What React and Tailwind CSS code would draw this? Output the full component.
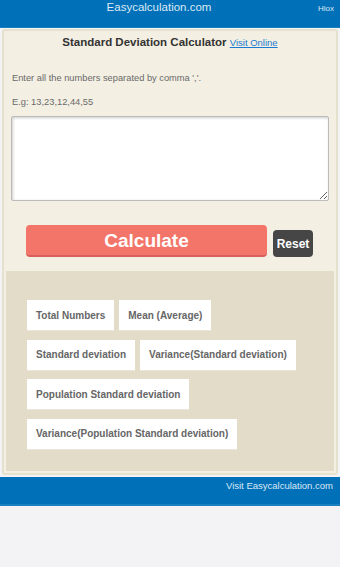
export default function App() {
  const results = [
    ['Total Numbers', 'Mean (Average)'],
    ['Standard deviation', 'Variance(Standard deviation)'],
    ['Population Standard deviation'],
    ['Variance(Population Standard deviation)'],
  ];

  return (
    <div className="min-h-[567px] bg-[#f3f2f5] font-['Liberation_Sans',Arial,sans-serif]">
      {/* Header */}
      <header className="relative h-[28px] bg-[#0070b8] border-b border-[#1a80c0]">
        <div className="text-center pr-[22px] text-[11.5px] leading-[14px] text-[#dde9f5]">
          Easycalculation.com
        </div>
        <span className="absolute right-[6px] top-[3px] text-[8px] text-[#dde9f5]">Hlox</span>
      </header>

      {/* Calculator card */}
      <div className="mx-[2px] mt-[1px] bg-[#f3efe3] border-[2px] border-[#e6e0cf] rounded-[3px] pb-[2px]">
        <h1 className="text-center pt-[3px] text-[11.5px] leading-[16px] font-bold text-[#333]">
          Standard Deviation Calculator{' '}
          <a className="text-[9.5px] font-normal text-[#1a7bd0] underline">Visit Online</a>
        </h1>

        <p className="mt-[21px] px-[8px] text-[9.3px] leading-[12px] text-[#6a6a6a]">
          Enter all the numbers separated by comma ','.
        </p>
        <p className="mt-[12px] px-[8px] text-[9.3px] leading-[12px] text-[#6a6a6a]">E.g: 13,23,12,44,55</p>

        <div className="px-[7px] mt-[8px]">
          <textarea className="block w-full h-[85px] bg-white border border-[#bbb] rounded-[2px] shadow-[inset_1px_1px_3px_rgba(0,0,0,0.2)]" />
        </div>

        <div className="flex items-end pl-[22px] mt-[24px]">
          <button className="w-[241px] h-[32px] bg-[#f37569] border-b-[2px] border-[#d9605a] rounded-[4px] text-white font-bold text-[19px] leading-[29px]">
            Calculate
          </button>
          <button className="ml-[6px] w-[40px] h-[27px] bg-[#464646] rounded-[4px] text-white font-bold text-[12px]">
            Reset
          </button>
        </div>

        {/* Results */}
        <div className="mx-[2px] mt-[14px] h-[200px] bg-[#e3dcc9] pt-[29px] pl-[21px] flex flex-col gap-[8.5px]">
          {results.map((row, i) => (
            <div key={i} className="flex gap-[5px]">
              {row.map((label) => (
                <div
                  key={label}
                  className="bg-white h-[31px] px-[9px] flex items-center text-[10px] font-bold text-[#666] border-b border-[#ece6d8]"
                >
                  {label}
                </div>
              ))}
            </div>
          ))}
        </div>
      </div>

      {/* Footer */}
      <footer className="mt-[2px] h-[29px] bg-[#0070b8] border-b-[2px] border-[#1a80c0] text-right pr-[7px] pt-[2px] text-[9.5px] text-[#dde9f5]">
        Visit Easycalculation.com
      </footer>
    </div>
  );
}
